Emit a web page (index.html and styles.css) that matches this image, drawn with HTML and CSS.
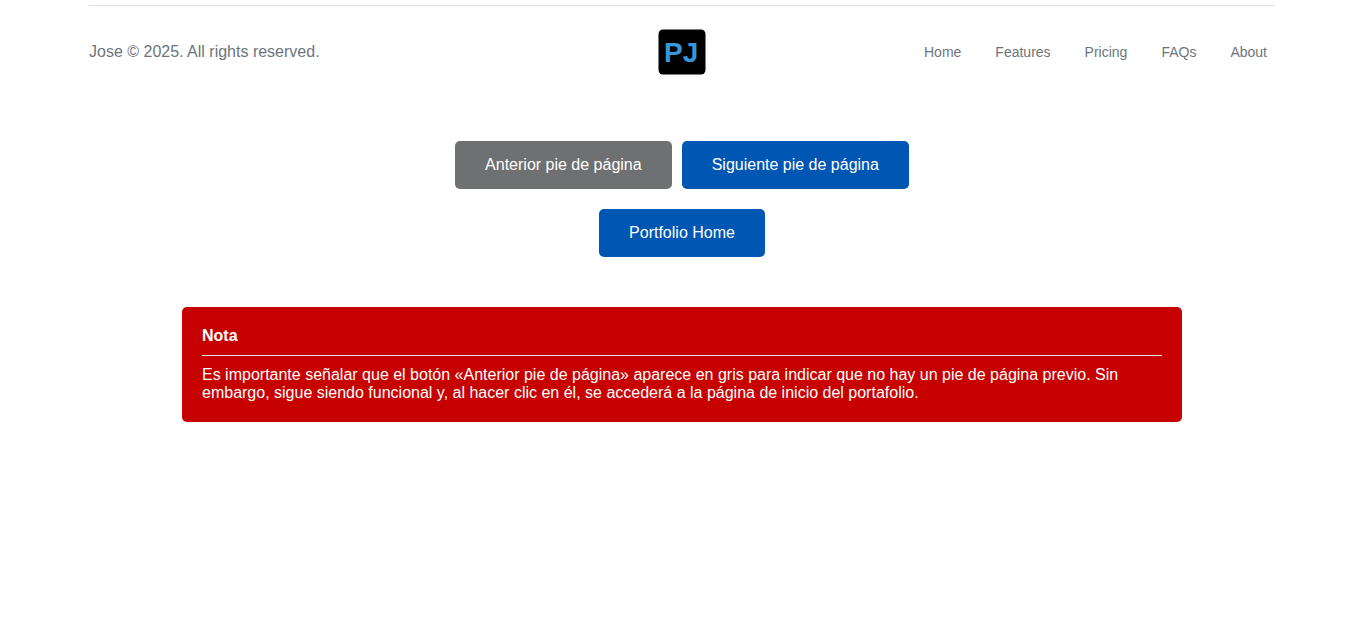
FILE: index.html
```html
<!DOCTYPE html>
<html lang="es">
<head>
<meta charset="utf-8">
<meta name="viewport" content="width=device-width, initial-scale=1">
<title>Pie de página</title>
<link rel="stylesheet" href="styles.css">
</head>
<body>
<footer class="footer">
  <p class="copyright">Jose © 2025. All rights reserved.</p>
  <a class="logo" href="#" aria-label="PJ">
    <svg class="logo-image" viewBox="0 0 48 46" width="48" height="46" aria-hidden="true">
      <rect x="0.5" y="0.5" width="47" height="45" rx="4.5" fill="#000"/>
      <text class="logo-text" x="6" y="33">PJ</text>
    </svg>
  </a>
  <nav class="footer-nav">
    <ul class="nav-list">
      <li><a class="nav-link" href="#">Home</a></li>
      <li><a class="nav-link" href="#">Features</a></li>
      <li><a class="nav-link" href="#">Pricing</a></li>
      <li><a class="nav-link" href="#">FAQs</a></li>
      <li><a class="nav-link" href="#">About</a></li>
    </ul>
  </nav>
</footer>
<main class="content">
  <div class="actions">
    <div class="button-row">
      <button class="button button-muted" type="button">Anterior pie de página</button>
      <button class="button" type="button">Siguiente pie de página</button>
    </div>
    <button class="button" type="button">Portfolio Home</button>
  </div>
  <section class="note">
    <h2 class="note-title">Nota</h2>
    <p class="note-text">Es importante señalar que el botón «Anterior pie de página» aparece en gris para indicar que no hay un pie de página previo. Sin embargo, sigue siendo funcional y, al hacer clic en él, se accederá a la página de inicio del portafolio.</p>
  </section>
</main>
</body>
</html>
```

FILE: styles.css
```css
* {
  box-sizing: border-box;
}

body {
  margin: 0;
  padding: 5px 21px 5px 20px;
  background: #fff;
  font-family: "Liberation Sans", Arial, sans-serif;
  font-size: 16px;
  line-height: 18px;
}

.footer {
  display: grid;
  grid-template-columns: 1fr auto 1fr;
  align-items: center;
  max-width: 1186px;
  margin: 0 auto;
  padding: 23px 0;
  border-top: 1px solid #dee2e6;
  color: #6c757d;
}

.copyright {
  margin: 0;
}

.logo-image {
  display: block;
}

.logo-text {
  fill: #3498db;
  font-size: 28px;
  font-weight: bold;
}

.nav-list {
  display: flex;
  flex-wrap: wrap;
  justify-content: flex-end;
  gap: 18px;
  margin: 0;
  padding: 0;
  list-style: none;
}

.nav-link {
  padding: 0 8px;
  color: #6c757d;
  font-size: 14px;
  text-decoration: none;
}

.content {
  max-width: 1000px;
  margin: 43px auto 0;
}

.actions {
  display: flex;
  flex-direction: column;
  align-items: center;
  gap: 20px;
}

.button-row {
  display: flex;
  flex-wrap: wrap;
  justify-content: center;
  gap: 10px;
}

.button {
  padding: 15px 30px;
  border: 0;
  border-radius: 5px;
  background: #0056b3;
  color: #fff;
  font: inherit;
  cursor: pointer;
}

.button-muted {
  background: #6f7072;
}

.note {
  margin-top: 50px;
  padding: 20px;
  border-radius: 5px;
  background: #c70000;
  color: #fff;
}

.note-title {
  margin: 0 0 10px;
  padding-bottom: 10px;
  border-bottom: 1px solid #dee2e6;
  font-size: 16px;
}

.note-text {
  margin: 0;
}
```
